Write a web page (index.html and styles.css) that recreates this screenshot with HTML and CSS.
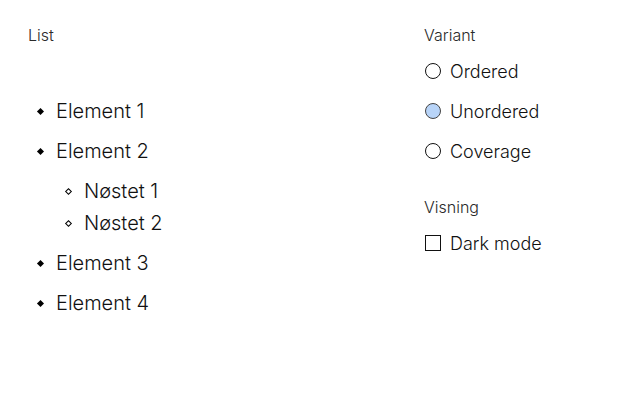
FILE: index.html
```html
<!DOCTYPE html>
<html lang="no">
<head>
<meta charset="utf-8">
<link rel="stylesheet" href="styles.css">
</head>
<body>
<div class="page">
  <section class="left">
    <div class="label">List</div>
    <ul class="list">
      <li><div class="row"><span class="bullet"></span>Element 1</div></li>
      <li><div class="row"><span class="bullet"></span>Element 2</div>
        <ul class="sublist">
          <li><div class="row sub"><span class="bullet hollow"></span>Nøstet 1</div></li>
          <li><div class="row sub"><span class="bullet hollow"></span>Nøstet 2</div></li>
        </ul>
      </li>
      <li><div class="row"><span class="bullet"></span>Element 3</div></li>
      <li><div class="row"><span class="bullet"></span>Element 4</div></li>
    </ul>
  </section>
  <section class="right">
    <div class="label">Variant</div>
    <div class="options">
      <label class="opt"><span class="radio"></span>Ordered</label>
      <label class="opt"><span class="radio checked"></span>Unordered</label>
      <label class="opt"><span class="radio"></span>Coverage</label>
    </div>
    <div class="label second">Visning</div>
    <div class="options">
      <label class="opt"><span class="check"></span>Dark mode</label>
    </div>
  </section>
</div>
</body>
</html>
```
FILE: styles.css
```css
html, body {
  margin: 0;
  padding: 0;
  background: #fff;
}
body {
  font-family: Inter, "Liberation Sans", sans-serif;
  font-weight: 300;
  color: #111;
}
.page {
  display: flex;
  padding: 25px 28px;
}
.left {
  width: 396px;
}
.right {
  flex: 1;
}
.label {
  font-size: 16px;
  line-height: 20px;
  color: #2a2a2a;
}
.list {
  list-style: none;
  margin: 46px 0 0;
  padding: 0;
}
.sublist {
  list-style: none;
  margin: 4px 0;
  padding: 0 0 0 28px;
}
.row {
  display: flex;
  align-items: center;
  height: 40px;
  font-size: 20px;
}
.row.sub {
  height: 32px;
}
.bullet {
  width: 5px;
  height: 5px;
  background: #000;
  transform: rotate(45deg);
  margin: 0 13.5px 0 9.5px;
  box-sizing: border-box;
}
.bullet.hollow {
  background: #fff;
  border: 1px solid #000;
}
.options {
  display: flex;
  flex-direction: column;
  margin-top: 6px;
}
.label.second {
  margin-top: 26px;
}
.opt {
  display: flex;
  align-items: center;
  height: 40px;
  font-size: 18px;
}
.radio, .check {
  width: 16px;
  height: 16px;
  box-sizing: border-box;
  border: 1px solid #111;
  margin: 0 9px 0 1px;
  background: #fff;
}
.radio {
  border-radius: 50%;
}
.radio.checked {
  background: #b8d4f8;
  border-color: #444;
}
```
